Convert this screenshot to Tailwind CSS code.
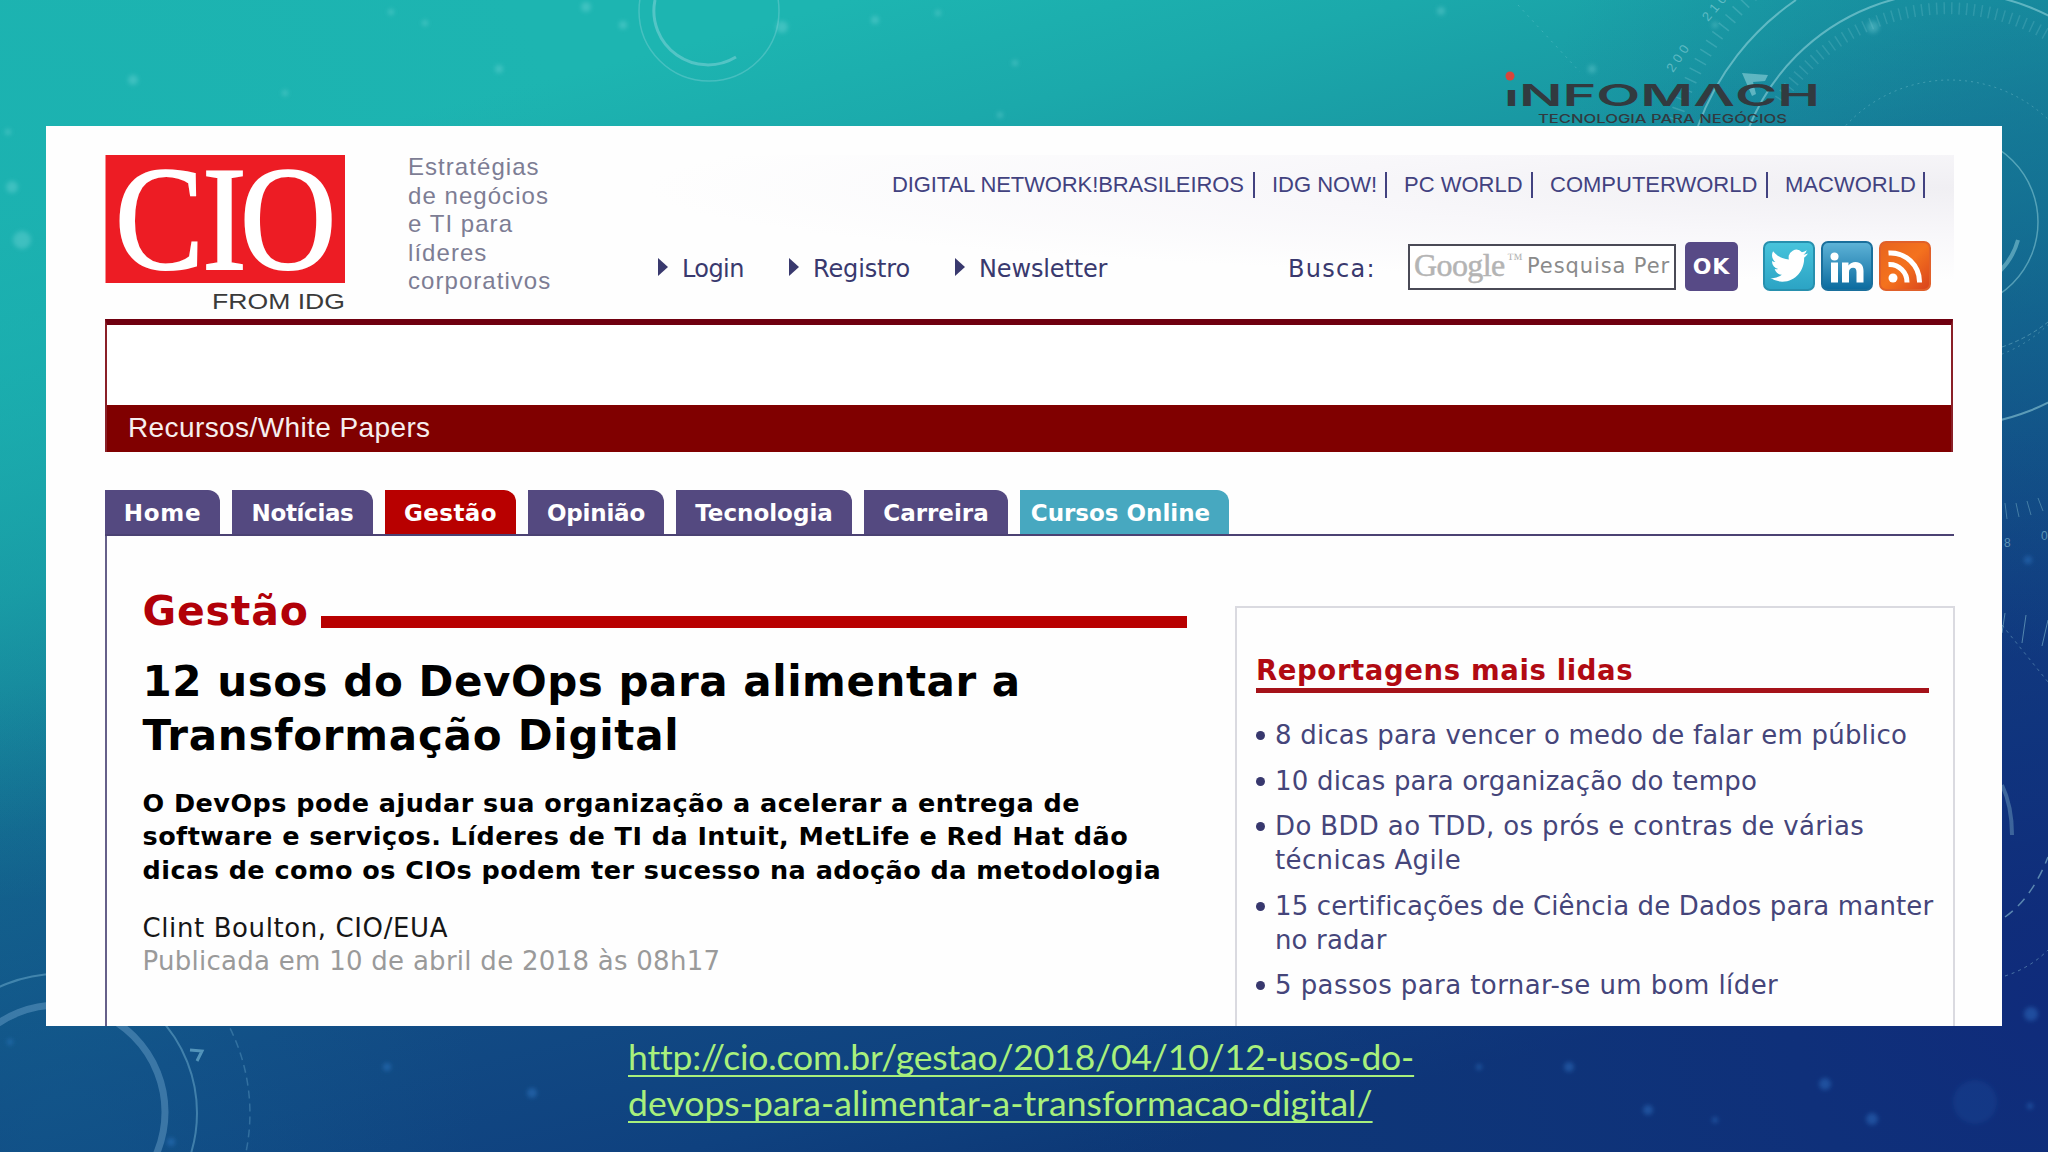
<!DOCTYPE html>
<html lang="pt-BR">
<head>
  <meta charset="UTF-8" />
  <meta name="viewport" content="width=device-width, initial-scale=1.0"/>
  <title>12 usos do DevOps para alimentar a Transformação Digital</title>
  <script src="https://cdn.jsdelivr.net/npm/@tailwindcss/browser@4"></script>
</head>
<body class="relative w-[2048px] h-[1152px] overflow-hidden bg-[#135a8c] font-['DejaVu_Sans',Verdana,sans-serif]">

  <!-- Slide background -->
  <svg class="absolute inset-0" width="2048" height="1152" viewBox="0 0 2048 1152" fill="none">
    <defs>
      <linearGradient id="bg" gradientUnits="userSpaceOnUse" x1="850" y1="0" x2="1150" y2="1152">
        <stop offset="0" stop-color="#1db5b1"/>
        <stop offset=".12" stop-color="#1ba9ab"/>
        <stop offset=".3" stop-color="#18909f"/>
        <stop offset=".5" stop-color="#13668e"/>
        <stop offset=".72" stop-color="#124c85"/>
        <stop offset=".9" stop-color="#0f417f"/>
        <stop offset="1" stop-color="#0d3876"/>
      </linearGradient>
      <radialGradient id="left" gradientUnits="userSpaceOnUse" cx="0" cy="300" r="600">
        <stop offset="0" stop-color="#1bb0b0" stop-opacity=".75"/>
        <stop offset="1" stop-color="#1bb0b0" stop-opacity="0"/>
      </radialGradient>
      <radialGradient id="right" gradientUnits="userSpaceOnUse" cx="2048" cy="1000" r="1000">
        <stop offset="0" stop-color="#10297c" stop-opacity=".85"/>
        <stop offset=".5" stop-color="#102f7c" stop-opacity=".5"/>
        <stop offset="1" stop-color="#10347c" stop-opacity="0"/>
      </radialGradient>
      <radialGradient id="corner" gradientUnits="userSpaceOnUse" cx="2048" cy="160" r="500">
        <stop offset="0" stop-color="#147796" stop-opacity=".6"/>
        <stop offset="1" stop-color="#147796" stop-opacity="0"/>
      </radialGradient>
      <radialGradient id="low" gradientUnits="userSpaceOnUse" cx="60" cy="1100" r="420">
        <stop offset="0" stop-color="#12608f" stop-opacity=".4"/>
        <stop offset="1" stop-color="#12608f" stop-opacity="0"/>
      </radialGradient>
      <filter id="soft" x="-5%" y="-5%" width="110%" height="110%"><feGaussianBlur stdDeviation="2"/></filter>
    </defs>
    <rect width="2048" height="1152" fill="url(#bg)"/>
    <rect width="2048" height="1152" fill="url(#left)"/>
    <rect width="2048" height="1152" fill="url(#right)"/>
    <rect width="2048" height="1152" fill="url(#corner)"/>
    <rect width="2048" height="1152" fill="url(#low)"/>

    <g stroke="#a5dfe6">
      <!-- top circle -->
      <circle cx="709" cy="11" r="70" stroke-opacity=".3" stroke-width="1.5"/>
      <path d="M655 0 A54 54 0 0 0 736 57" stroke-opacity=".4" stroke-width="3"/>
      <!-- top right dial -->
      <circle cx="1950" cy="209" r="217" stroke-opacity=".5" stroke-width="2"/>
      <path d="M1698 126 A262 262 0 0 1 1796 0" stroke-opacity=".5" stroke-width="2"/>
      <path d="M1675 120 A290 290 0 0 1 1770 -20" stroke-opacity=".22" stroke-width="13" stroke-dasharray="1.5 9"/>
      <path d="M1780 100 A200 200 0 0 1 2048 35" stroke-opacity=".17" stroke-width="12" stroke-dasharray="1.5 6"/>
      <circle cx="1950" cy="222" r="142" stroke-opacity=".3" stroke-dasharray="2 4"/>
      <circle cx="1951" cy="222" r="87" stroke-opacity=".45" stroke-width="1.5"/>
      <path d="M2018 240 A70 70 0 0 1 2000 271" stroke-opacity=".45" stroke-width="4"/>
      <path d="M1518 5 L1580 72" stroke-opacity=".25" stroke-dasharray="2 5"/>
      <!-- right side -->
      <path d="M2002 347 Q2028 338 2048 322" stroke-opacity=".35" stroke-dasharray="4 3"/>
      <path d="M2005 503l2 16M2016 503l3 14M2027 501l4 14M2038 498l5 13" stroke-opacity=".35"/>
      <path d="M2005 613l-3 20M2026 615l-4 28M2048 620l-6 26" stroke-opacity=".45"/>
      <path d="M2002 625L2048 682" stroke-opacity=".35" stroke-dasharray="3 4"/>
      <path d="M2002 785Q2012 806 2012 835" stroke-opacity=".3" stroke-width="4"/>
      <path d="M2005 917Q2032 898 2048 857" stroke-opacity=".5" stroke-width="1.5" stroke-dasharray="10 7"/>
      <path d="M2005 976Q2030 968 2048 950" stroke-opacity=".4" stroke-dasharray="3 4"/>
      <!-- bottom left rings -->
      <circle cx="58" cy="1112" r="107" stroke="#6fa5cc" stroke-opacity=".45" stroke-width="7"/>
      <circle cx="58" cy="1113" r="139" stroke="#6fb0d0" stroke-opacity=".5" stroke-width="2"/>
      <path d="M224 1017A192 192 0 0 1 246 1152" stroke="#6fb0d0" stroke-opacity=".35" stroke-width="1.5" stroke-dasharray="8 5"/>
      <path d="M190 1050l12 1-5 10" stroke="#6fb0d0" stroke-opacity=".7" stroke-width="3"/>
    </g>
    <path d="M1742 73l26 2-3 6-12 1 3 12-4 2z" fill="#a5e0e6" fill-opacity=".5"/>
    <g fill="#a5dfe6" fill-opacity=".5" font-family="Liberation Sans" font-size="13" letter-spacing="4">
      <text transform="translate(1673 73) rotate(-56)">200</text>
      <text transform="translate(1708 22) rotate(-50)">210</text>
      <text x="2004" y="547" font-size="12">8</text>
      <text x="2041" y="540" font-size="12" letter-spacing="0">0</text>
    </g>
    <!-- stars -->
    <g fill="#8fe0e6" fill-opacity=".3" filter="url(#soft)">
      <circle cx="499" cy="69" r="4"/><circle cx="425" cy="23" r="3"/><circle cx="586" cy="7" r="5"/><circle cx="623" cy="25" r="4"/>
      <circle cx="782" cy="27" r="6"/><circle cx="938" cy="13" r="3"/><circle cx="875" cy="20" r="4"/><circle cx="1000" cy="115" r="3"/>
      <circle cx="1015" cy="63" r="3"/><circle cx="133" cy="80" r="5"/><circle cx="285" cy="93" r="3"/><circle cx="391" cy="12" r="3"/>
      <circle cx="1441" cy="11" r="4"/><circle cx="1592" cy="69" r="4"/><circle cx="1873" cy="27" r="6"/><circle cx="12" cy="187" r="6"/>
      <circle cx="8" cy="132" r="3"/><circle cx="22" cy="240" r="9"/><circle cx="1715" cy="25" r="3"/>
    </g>
    <g fill="#3f8be0" fill-opacity=".35" filter="url(#soft)">
      <circle cx="387" cy="1067" r="4"/><circle cx="532" cy="1093" r="5"/><circle cx="10" cy="1042" r="3"/><circle cx="171" cy="1142" r="4"/>
      <circle cx="1479" cy="1067" r="3"/><circle cx="1569" cy="1067" r="5"/><circle cx="1648" cy="1110" r="5"/><circle cx="1825" cy="1084" r="6"/>
      <circle cx="1872" cy="1119" r="6"/><circle cx="1715" cy="1120" r="3"/><circle cx="1975" cy="1102" r="22" fill-opacity=".1"/><circle cx="2031" cy="1014" r="7"/>
      <circle cx="2028" cy="560" r="4"/><circle cx="2030" cy="1106" r="3"/>
    </g>
  </svg>

  <header class="relative h-[126px]">
    <svg class="absolute left-[1500px] top-[66px]" width="325" height="60" viewBox="0 0 325 60">
      <circle cx="10" cy="10" r="4.5" fill="#d8453a"/>
      <g fill="#323a3f" font-family="Inter, sans-serif">
        <text x="4" y="40" font-size="29.5" font-weight="600" textLength="316" lengthAdjust="spacingAndGlyphs">ıNFOMΛCH</text>
        <text x="38" y="57" font-size="11.5" font-weight="500" textLength="249" lengthAdjust="spacingAndGlyphs">TECNOLOGIA PARA NEGÓCIOS</text>
      </g>
    </svg>
  </header>

  <main class="relative ml-[46px] w-[1956px] h-[900px] pl-[59px] pt-[29px] bg-[#fefefe] overflow-hidden flex flex-col">

    <!-- Site header -->
    <div class="flex w-[1849px] h-[164px] shrink-0 bg-radial-[at_100%_20%] from-[#f0eff3] via-[#f8f7fa] via-25% to-[#fefefe] to-50%">
      <svg class="shrink-0" width="241" height="164" viewBox="0 0 241 164">
        <rect x=".5" width="239.500" height="128" fill="#ed1c24"/>
        <text transform="scale(.9 1)" x="11 108 150" y="114" fill="#fff" stroke="#fff" stroke-width="2" font-family="Liberation Serif" font-size="148">CIO</text>
        <text x="107" y="154" fill="#3a3a3a" font-family="Liberation Sans" font-size="22" textLength="133" lengthAdjust="spacingAndGlyphs">FROM IDG</text>
      </svg>
      <p class="ml-[62px] -mt-[2px] w-[159px] shrink-0 font-['Liberation_Sans'] text-2xl leading-[28.6px] tracking-[1.05px] text-[#7d7d94]">Estratégias<br>de negócios<br>e TI para<br>líderes<br>corporativos</p>

      <div class="grow pt-[17px]">
        <nav class="flex justify-end gap-[17px] mr-[29px] font-['Liberation_Sans'] text-[22px] leading-[26px] text-[#424280] whitespace-nowrap">
          <a class="w-[363px] border-r-2 border-[#424280] tracking-[-0.1px]">DIGITAL NETWORK!BRASILEIROS</a>
          <a class="w-[115px] border-r-2 border-[#424280]">IDG NOW!</a>
          <a class="w-[129px] border-r-2 border-[#424280]">PC WORLD</a>
          <a class="w-[218px] border-r-2 border-[#424280]">COMPUTERWORLD</a>
          <a class="w-[140px] border-r-2 border-[#424280]">MACWORLD</a>
        </nav>

        <div class="flex mt-[43px] pl-[91px] text-2xl leading-[25px] text-[#39396e]">
          <a class="flex w-[131px] pt-[16px] tracking-[-0.6px]">
            <svg class="mr-[14px] mt-px" width="10" height="18" viewBox="0 0 10 18"><path d="M0 0L10 9L0 18z" fill="#39396e"/></svg>Login
          </a>
          <a class="flex w-[166px] pt-[16px] tracking-[-0.15px]">
            <svg class="mr-[14px] mt-px" width="10" height="18" viewBox="0 0 10 18"><path d="M0 0L10 9L0 18z" fill="#39396e"/></svg>Registro
          </a>
          <a class="flex w-[333px] pt-[16px] tracking-[-0.15px]">
            <svg class="mr-[14px] mt-px" width="10" height="18" viewBox="0 0 10 18"><path d="M0 0L10 9L0 18z" fill="#39396e"/></svg>Newsletter
          </a>
          <label class="w-[120px] pt-[16px] tracking-[1.3px]">Busca:</label>
          <div class="flex w-[268px] h-[46px] mt-[3px] border-2 border-[#4a4a56] bg-white overflow-hidden whitespace-nowrap">
            <span class="ml-[4px] mt-[2px] w-[93px] shrink-0 font-['Liberation_Serif'] text-[32px] leading-[34px] tracking-[-0.6px] text-[#b4b4b4] [-webkit-text-stroke:0.5px_#b4b4b4]">Google</span>
            <span class="w-[20px] shrink-0 text-[16px] leading-[26px] font-['Liberation_Serif'] text-[#b4b4b4]">™</span>
            <span class="mt-[8px] shrink-0 text-[21px] tracking-[0.9px] text-[#8a8a8a]">Pesquisa Per</span>
          </div>
          <button class="ml-[9px] mt-px w-[53px] h-[49px] rounded-[5px] bg-[#574a86] text-white text-[22px] leading-[47px] font-bold tracking-[1px]">OK</button>

          <!-- Social icons -->
          <div class="flex gap-[6px] ml-[25px]">
            <svg width="52" height="50" viewBox="0 0 52 50">
              <defs><linearGradient id="tw" x1="0" y1="0" x2="0" y2="1"><stop offset="0" stop-color="#48c4dc"/><stop offset="1" stop-color="#2ba3c4"/></linearGradient></defs>
              <rect x="1" y="1" width="50" height="48" rx="6" fill="url(#tw)" stroke="#2790ae" stroke-width="2"/>
              <path transform="translate(7.500 5) scale(1.560 1.640)" fill="#fff" d="M23.950 4.570a10 10 0 01-2.820.770 4.960 4.960 0 002.160-2.720c-.950.550-2 .950-3.130 1.180a4.920 4.920 0 00-8.380 4.480C7.690 8.090 4.070 6.130 1.640 3.160a4.820 4.820 0 00-.670 2.480c0 1.710.870 3.210 2.190 4.100a4.900 4.900 0 01-2.230-.620v.060a4.920 4.920 0 003.950 4.830 5 5 0 01-2.210.080 4.940 4.940 0 004.600 3.420A9.870 9.870 0 010 19.540a14 14 0 007.560 2.210c9.050 0 14-7.500 14-13.980 0-.210 0-.420-.020-.630a9.940 9.940 0 002.460-2.550z"/>
            </svg>
            <svg width="52" height="50" viewBox="0 0 52 50">
              <defs><linearGradient id="li" x1="0" y1="0" x2="0" y2="1"><stop offset="0" stop-color="#5fb4d8"/><stop offset="1" stop-color="#0a6a9e"/></linearGradient></defs>
              <rect x="1" y="1" width="50" height="48" rx="6" fill="url(#li)" stroke="#1a6f9c" stroke-width="2"/>
              <g fill="#fff"><circle cx="13.500" cy="15.500" r="4"/><rect x="10" y="21.500" width="7" height="20"/><path d="M21 21.500h6.500v3c1.500-2.300 4-3.500 7-3.500 5.500 0 8 3.500 8 9v11.500h-7V31c0-2.700-1-4.200-3.400-4.200-2.600 0-4.100 1.700-4.100 4.400v10.300h-7z"/></g>
            </svg>
            <svg width="52" height="50" viewBox="0 0 52 50">
              <defs><linearGradient id="rss" x1="0" y1="0" x2="1" y2="1"><stop offset="0" stop-color="#e8641e"/><stop offset=".5" stop-color="#f4721e"/><stop offset="1" stop-color="#d8421c"/></linearGradient></defs>
              <rect x="1" y="1" width="50" height="48" rx="6" fill="url(#rss)" stroke="#e0602a" stroke-width="2"/>
              <circle cx="14" cy="37" r="4.500" fill="#fff"/>
              <g fill="none" stroke="#fff" stroke-width="5"><path d="M9.500 23.500A17.500 17.500 0 0 1 28 41.500"/><path d="M9.500 12A29 29 0 0 1 40.500 41.500"/></g>
            </svg>
          </div>
        </div>
      </div>
    </div>

    <!-- Banner -->
    <section class="flex flex-col justify-end w-[1848px] h-[133px] shrink-0 border-t-6 border-t-[#700010] border-x-2 border-x-[#8a2028] bg-white">
      <div class="h-[47px] pl-[21px] bg-[#800000] font-['Liberation_Sans'] text-[28px] leading-[46px] tracking-[0.4px] text-[#f6eeee]">Recursos/White Papers</div>
    </section>

    <!-- Tabs -->
    <nav class="flex w-[1849px] mt-[38px] shrink-0 border-b-2 border-[#4b4273] text-[23px] leading-[46px] font-bold text-white text-center">
      <a class="w-[115px] h-[44px] mr-[12px] rounded-tr-xl bg-[#544980] tracking-[0.7px]">Home</a>
      <a class="w-[141px] h-[44px] mr-[12px] rounded-tr-xl bg-[#544980] tracking-[-0.35px]">Notícias</a>
      <a class="w-[131px] h-[44px] mr-[12px] rounded-tr-xl bg-[#b80000] tracking-[0.4px]">Gestão</a>
      <a class="w-[136px] h-[44px] mr-[12px] rounded-tr-xl bg-[#544980] tracking-[-0.2px]">Opinião</a>
      <a class="w-[176px] h-[44px] mr-[12px] rounded-tr-xl bg-[#544980]">Tecnologia</a>
      <a class="w-[144px] h-[44px] mr-[12px] rounded-tr-xl bg-[#544980]">Carreira</a>
      <a class="w-[209px] h-[44px] pr-[8px] rounded-tr-xl bg-[#47a8c0]">Cursos Online</a>
    </nav>

    <div class="flex grow border-l-2 border-[#66608a]">
      <article class="w-[1128px] shrink-0 pl-[35.5px] pt-[52px]">
        <div class="flex">
          <h2 class="w-[178.5px] text-[41px] leading-[46px] font-bold tracking-[0.8px] text-[#b10008]">Gestão</h2>
          <div class="w-[866px] h-[12px] mt-[28px] bg-[#b80000]"></div>
        </div>
        <h1 class="mt-[21px] text-[42px] leading-[54.3px] font-bold tracking-[0.55px] text-black whitespace-nowrap">12 usos do DevOps para alimentar a<br><span class="tracking-[0.75px]">Transformação Digital</span></h1>
        <p class="mt-[23px] text-[25.5px] leading-[33.7px] font-bold tracking-[0.46px] text-black whitespace-nowrap">O DevOps pode ajudar sua organização a acelerar a entrega de<br>software e serviços. Líderes de TI da Intuit, MetLife e Red Hat dão<br>dicas de como os CIOs podem ter sucesso na adoção da metodologia</p>
        <p class="mt-[24px] text-[26px] leading-[33.3px] tracking-[0.6px] text-[#161616]">Clint Boulton, CIO/EUA</p>
        <p class="text-[26px] leading-[33.3px] tracking-[0.27px] text-[#9a9a9a]">Publicada em 10 de abril de 2018 às 08h17</p>
      </article>

      <aside class="w-[720px] mt-[70px] shrink-0 border-2 border-b-0 border-[#dadae0] pl-[19px] pt-[46px] whitespace-nowrap">
        <h3 class="w-[673px] h-[39px] border-b-5 border-[#a51219] text-[27.5px] leading-[32px] font-bold tracking-[0.62px] text-[#b10a12]">Reportagens mais lidas</h3>
        <ul class="mt-[26px] flex flex-col gap-[11.7px] text-[26px] leading-[33.9px] tracking-[0.2px] text-[#45457a]">
          <li class="flex"><span class="size-[9px] mt-[12px] mr-[10px] rounded-full bg-[#38386e]"></span>8 dicas para vencer o medo de falar em público</li>
          <li class="flex"><span class="size-[9px] mt-[12px] mr-[10px] rounded-full bg-[#38386e]"></span>10 dicas para organização do tempo</li>
          <li class="flex tracking-[0.36px]"><span class="size-[9px] mt-[12px] mr-[10px] rounded-full bg-[#38386e]"></span>Do BDD ao TDD, os prós e contras de várias<br>técnicas Agile</li>
          <li class="flex tracking-[0.14px]"><span class="size-[9px] mt-[12px] mr-[10px] rounded-full bg-[#38386e]"></span>15 certificações de Ciência de Dados para manter<br>no radar</li>
          <li class="flex tracking-[0.42px]"><span class="size-[9px] mt-[12px] mr-[10px] rounded-full bg-[#38386e]"></span>5 passos para tornar-se um bom líder</li>
        </ul>
      </aside>
    </div>
  </main>

  <footer class="relative pl-[628px] pt-[7.5px] font-[Lato] text-[35.5px] leading-[46px] text-[#a8f07c] whitespace-nowrap">
    <a class="underline decoration-2 underline-offset-[5px] [text-decoration-skip-ink:none]"><span class="tracking-[-0.16px]">http://cio.com.br/gestao/2018/04/10/12-usos-do-</span><br><span class="tracking-[0.05px]">devops-para-alimentar-a-transformacao-digital/</span></a>
  </footer>

</body>
</html>
